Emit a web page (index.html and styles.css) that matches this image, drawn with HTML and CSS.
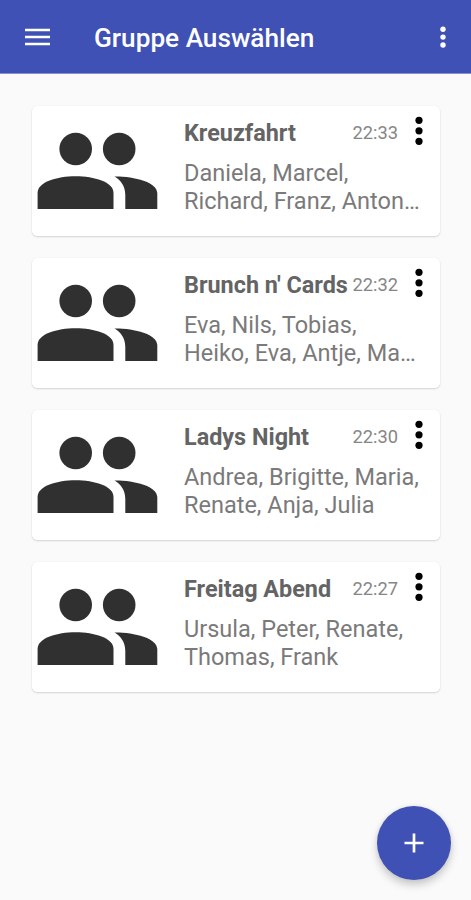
FILE: index.html
```html
<!DOCTYPE html>
<html lang="de">
<head>
<meta charset="utf-8">
<title>Gruppe Auswählen</title>
<link rel="stylesheet" href="styles.css">
</head>
<body>
<svg class="defs" aria-hidden="true">
  <symbol id="people" viewBox="0 0 121 78">
    <circle cx="38.7" cy="17" r="16.3"/>
    <circle cx="82.2" cy="17" r="16.3"/>
    <path d="M.6 77V61C.6 50 20 44.3 38.6 44.3S76.5 50 76.5 61V77Z"/>
    <path d="M77.5 44.4C97 44.2 120.3 50 120.3 61V77H88.3V63C88.3 54 84 48.5 77.5 44.4Z"/>
  </symbol>
  <symbol id="dots" viewBox="0 0 8 30">
    <circle cx="4" cy="4.3" r="3.6"/>
    <circle cx="4" cy="14.8" r="3.6"/>
    <circle cx="4" cy="25.3" r="3.6"/>
  </symbol>
</svg>
<header class="bar">
  <svg class="menu" viewBox="0 0 25 18"><path d="M0 2h25M0 9h25M0 16h25"/></svg>
  <h1 class="bar-title">Gruppe Auswählen</h1>
  <svg class="bar-more"><use href="#dots"/></svg>
</header>
<main class="list">
  <article class="card">
    <svg class="people"><use href="#people"/></svg>
    <div class="info">
      <div class="head"><h2 class="name">Kreuzfahrt</h2><time class="time">22:33</time><svg class="more"><use href="#dots"/></svg></div>
      <p class="members">Daniela, Marcel,<br>Richard, Franz, Anton…</p>
    </div>
  </article>
  <article class="card">
    <svg class="people"><use href="#people"/></svg>
    <div class="info">
      <div class="head"><h2 class="name">Brunch n' Cards</h2><time class="time">22:32</time><svg class="more"><use href="#dots"/></svg></div>
      <p class="members">Eva, Nils, Tobias,<br>Heiko, Eva, Antje, Ma…</p>
    </div>
  </article>
  <article class="card">
    <svg class="people"><use href="#people"/></svg>
    <div class="info">
      <div class="head"><h2 class="name">Ladys Night</h2><time class="time">22:30</time><svg class="more"><use href="#dots"/></svg></div>
      <p class="members">Andrea, Brigitte, Maria,<br>Renate, Anja, Julia</p>
    </div>
  </article>
  <article class="card">
    <svg class="people"><use href="#people"/></svg>
    <div class="info">
      <div class="head"><h2 class="name">Freitag Abend</h2><time class="time">22:27</time><svg class="more"><use href="#dots"/></svg></div>
      <p class="members">Ursula, Peter, Renate,<br>Thomas, Frank</p>
    </div>
  </article>
</main>
<button class="fab" aria-label="Neue Gruppe"><svg class="plus" viewBox="0 0 20 20"><path d="M10 .5v19M.5 10h19"/></svg></button>
</body>
</html>
```
FILE: styles.css
```css
* { box-sizing: border-box; }
body {
  margin: 0;
  height: 900px;
  overflow: hidden;
  background: #fafafa;
  font-family: Roboto, "Liberation Sans", sans-serif;
}
h1, h2, p { margin: 0; }
.defs { position: absolute; width: 0; height: 0; }
.bar {
  display: flex;
  align-items: center;
  height: 74px;
  padding: 1px 24px 0 25px;
  background: #3f51b5;
  border-bottom: 1px solid #8790cc;
}
.menu { width: 25px; height: 18px; stroke: #fff; stroke-width: 2.7; }
.bar-title {
  flex: 1;
  margin-left: 44px;
  padding-top: 2px;
  color: #fff;
  font-size: 26.2px;
  font-weight: 500;
  line-height: 30px;
  white-space: nowrap;
}
.bar-more { width: 8px; height: 22.5px; fill: #fff; }
.list {
  display: flex;
  flex-direction: column;
  gap: 22px;
  padding: 32px 31px 0 32px;
}
.card {
  display: flex;
  height: 130px;
  padding: 0 0 0 5px;
  background: #fff;
  border-radius: 5px;
  box-shadow: 0 1px 2px rgba(0, 0, 0, .15), 0 0 1px rgba(0, 0, 0, .08);
}
.people { flex: none; width: 121px; height: 78px; margin-top: 26px; fill: #303030; }
.info { flex: 1; min-width: 0; margin-left: 26px; padding-top: 10px; }
.head { display: flex; align-items: center; height: 33px; padding-right: 17px; }
.name {
  flex: 1;
  color: #646464;
  font-size: 23.4px;
  font-weight: 700;
  line-height: 28px;
  white-space: nowrap;
}
.time { color: #868686; font-size: 18.3px; line-height: 28px; }
.more { width: 8px; height: 30px; margin: -3px 0 0 17px; fill: #000; }
.members {
  margin-top: 11px;
  color: #7a7a7a;
  font-size: 23.5px;
  line-height: 27.5px;
  white-space: nowrap;
}
.fab {
  position: absolute;
  left: 377px;
  top: 806px;
  display: flex;
  align-items: center;
  justify-content: center;
  width: 74px;
  height: 74px;
  padding: 0;
  border: 0;
  border-radius: 50%;
  background: #3f51b5;
  box-shadow: 0 5px 9px rgba(0, 0, 0, .2), 0 0 4px rgba(0, 0, 0, .08);
}
.plus { width: 20px; height: 20px; stroke: #fff; stroke-width: 2.7; }
```
